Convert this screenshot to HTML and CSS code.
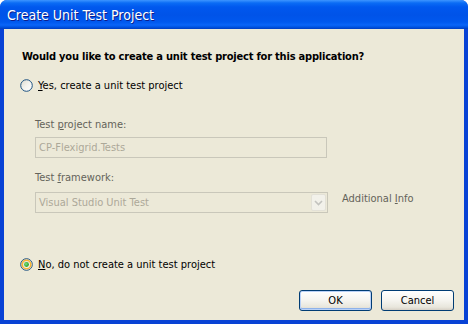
FILE: index.html
```html
<!DOCTYPE html>
<html lang="en">
<head>
  <meta charset="UTF-8" />
  <title>Create Unit Test Project</title>
  <link rel="stylesheet" href="styles.css">
</head>
<body>

  <div class="window">
    <div class="titlebar">Create Unit Test Project</div>

    <div class="client">
      <p class="question">Would you like to create a unit test project for this application?</p>

      <label class="radio-row yes">
        <svg class="radio" width="13" height="13" viewBox="0 0 13 13">
          <defs>
            <linearGradient id="rfill" x1="0" y1="0" x2="1" y2="1">
              <stop offset="0" stop-color="#dcd9cc"/>
              <stop offset="0.5" stop-color="#f4f3ee"/>
              <stop offset="1" stop-color="#ffffff"/>
            </linearGradient>
          </defs>
          <circle cx="6.5" cy="6.5" r="5.8" fill="url(#rfill)" stroke="#1c5180" stroke-width="1"/>
        </svg>
        <span><u>Y</u>es, create a unit test project</span>
      </label>

      <div class="options">
        <div class="field-label">Test <u>p</u>roject name:</div>
        <div class="textbox">CP-Flexigrid.Tests</div>

        <div class="field-label framework">Test <u>f</u>ramework:</div>
        <div class="combo-row">
          <div class="combo">
            <span>Visual Studio Unit Test</span>
            <span class="combo-btn">
              <svg width="9" height="6" viewBox="0 0 9 6">
                <path d="M1 1 L4.5 4.5 L8 1" fill="none" stroke="#c3c3bf" stroke-width="1.6"/>
              </svg>
            </span>
          </div>
          <span class="info"><span>Additional <u>I</u>nfo</span></span>
        </div>
      </div>

      <label class="radio-row no">
        <svg class="radio" width="13" height="13" viewBox="0 0 13 13">
          <defs>
            <linearGradient id="rfill2" x1="0" y1="0" x2="1" y2="1">
              <stop offset="0" stop-color="#dcd9cc"/>
              <stop offset="1" stop-color="#ffffff"/>
            </linearGradient>
            <radialGradient id="dot" cx="0.4" cy="0.4" r="0.6">
              <stop offset="0" stop-color="#7fe07f"/>
              <stop offset="1" stop-color="#21a121"/>
            </radialGradient>
          </defs>
          <circle cx="6.5" cy="6.5" r="5.8" fill="url(#rfill2)" stroke="#1c5180" stroke-width="1"/>
          <circle cx="6.5" cy="6.5" r="4.3" fill="none" stroke="#f8b636" stroke-width="1.6"/>
          <circle cx="6.5" cy="6.5" r="2.4" fill="url(#dot)"/>
        </svg>
        <span><u>N</u>o, do not create a unit test project</span>
      </label>

      <div class="buttons">
        <button class="btn default">OK</button>
        <button class="btn">Cancel</button>
      </div>
    </div>
  </div>

</body>
</html>
```

FILE: styles.css
```css
* {
  margin: 0; padding: 0; box-sizing: border-box;
}
body {
  background: #ffffff;
  width: 471px;
  height: 324px;
  overflow: hidden;
  font-family: 'DejaVu Sans Condensed', 'DejaVu Sans', sans-serif;
  font-size: 11px;
  color: #000000;
}
.window {
  width: 468px;
  height: 324px;
  display: flex;
  flex-direction: column;
  background: #0842d5;
  border-radius: 7px 7px 0 0;
  overflow: hidden;
}
.titlebar {
  height: 29px;
  flex: none;
  padding: 0 0 0 7px;
  line-height: 30px;
  color: #ffffff;
  font-size: 14px;
  font-family: 'DejaVu Sans Condensed', 'DejaVu Sans', sans-serif;
  text-shadow: 1px 1px 0 #0f1e8a;
  background: linear-gradient(to bottom,
    #3d95ff 0, #0a6cf5 3px, #0058ee 7px, #0053e8 15px,
    #0058ee 22px, #0a65f8 25px, #0054e3 27px, #003dc0 29px);
}
.client {
  flex: 1;
  margin: 0 4px 4px 4px;
  background: #ece9d8;
  display: flex;
  flex-direction: column;
  padding: 0 0 0 16px;
}
.question {
  font-weight: bold;
  margin-top: 21px;
  line-height: 13px;
  padding-left: 2px;
  letter-spacing: -0.2px;
}
.radio-row {
  display: flex;
  align-items: center;
  gap: 5px;
  line-height: 13px;
}
.radio-row.yes {
  margin-top: 16px;
}
.radio-row.no {
  margin-top: 45px;
}
.radio { flex: none; }
.options {
  display: flex;
  flex-direction: column;
  padding-left: 15px;
  color: #64635a;
}
.field-label {
  margin-top: 26px;
  line-height: 13px;
}
.field-label.framework {
  margin-top: 13px;
}
.textbox {
  width: 292px;
  height: 21px;
  margin-top: 6px;
  border: 1px solid #c9c7ba;
  color: #aca899;
  line-height: 19px;
  padding-left: 3px;
}
.combo-row {
  display: flex;
  align-items: center;
  margin-top: 8px;
  gap: 14px;
}
.combo {
  width: 293px;
  height: 21px;
  border: 1px solid #c9c7ba;
  color: #aca899;
  display: flex;
  align-items: center;
  justify-content: space-between;
  padding: 1px 1px 1px 3px;
}
.combo-btn {
  width: 15px;
  height: 17px;
  background: #f2f1ea;
  border: 1px solid #e3e1d7;
  border-radius: 2px;
  display: flex;
  align-items: center;
  justify-content: center;
}
.info {
  color: #64635a;
  align-self: flex-start;
  padding-top: 0;
}
.buttons {
  display: flex;
  justify-content: flex-end;
  gap: 9px;
  margin-top: 19px;
  padding-right: 10px;
}
.btn {
  width: 73px;
  height: 21px;
  font-family: inherit;
  font-size: 11px;
  color: #000000;
  border: 1px solid #003c74;
  border-radius: 3px;
  background: linear-gradient(to bottom, #ffffff 0, #f5f4ef 50%, #e8e6dc 85%, #d6d0c5 100%);
}
.btn.default {
  box-shadow: inset 0 0 0 1px #b9d1f7, inset 0 -1px 0 1px #8eb2ea;
}
```
